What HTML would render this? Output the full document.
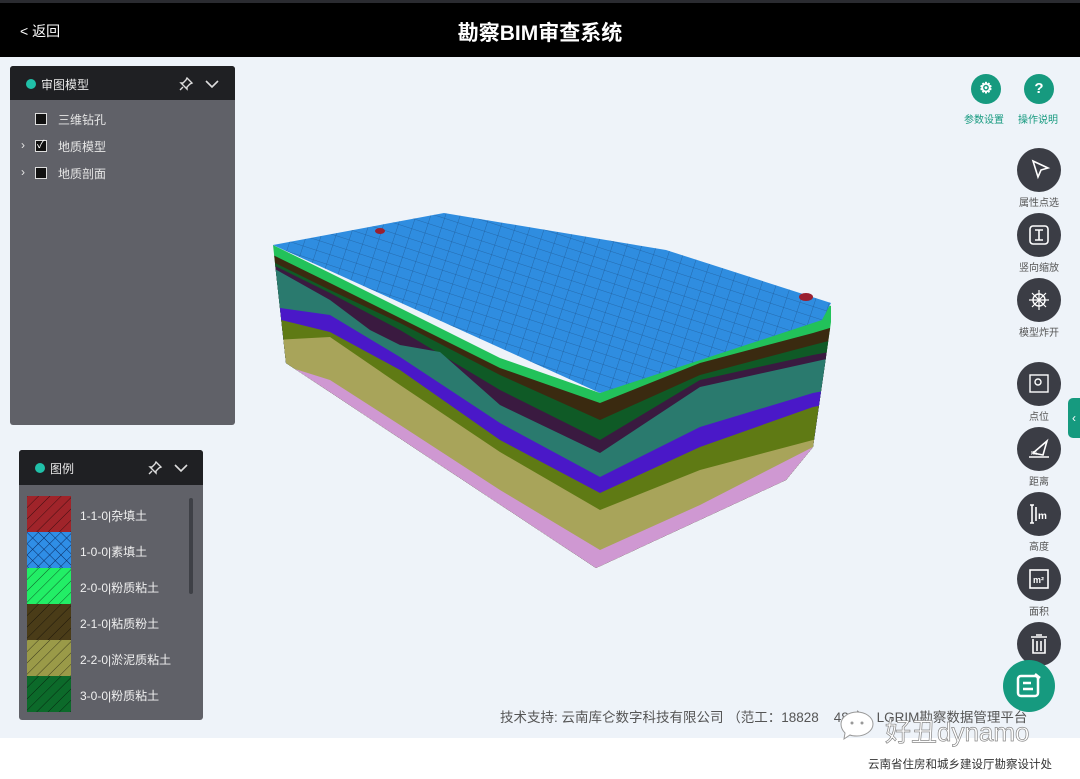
<!DOCTYPE html>
<html><head><meta charset="utf-8"><style>
*{margin:0;padding:0;box-sizing:border-box}
body{width:1080px;height:779px;overflow:hidden;background:#eef3f9;font-family:"Liberation Sans","Noto Sans CJK SC",sans-serif;position:relative}
.hdr{position:absolute;left:0;top:0;width:1080px;height:57px;background:#000;border-top:3px solid #2a2b30}
.hdr .back{position:absolute;left:20px;top:18px;color:#fff;font-size:14px}
.hdr .title{position:absolute;left:0;right:0;top:14px;text-align:center;color:#fff;font-size:21px;font-weight:bold}
.panel{position:absolute;background:#606168;border-radius:3px;overflow:hidden}
.ph{height:34px;background:#1f2023;color:#e8e8e8;font-size:12px;position:relative}
.ph .dot{position:absolute;left:16px;top:13px;width:10px;height:10px;border-radius:50%;background:#20c0a8}
.ph .t{position:absolute;left:31px;top:10px}
.ph svg{position:absolute;top:10px}
.item{position:absolute;color:#e6e6e6;font-size:12px}
.cb{position:absolute;width:12px;height:12px;border:1px solid #ddd;background:#111}
.sw{position:absolute;left:8px;width:44px;height:36px}
.lt{position:absolute;left:61px;color:#f0f0f0;font-size:12px}
.rb{position:absolute;left:1017px;width:44px;height:44px;border-radius:50%;background:#3b3d45}
.rl{position:absolute;width:60px;left:1009px;text-align:center;font-size:10px;color:#555}
.gb{position:absolute;width:30px;height:30px;border-radius:50%;background:#169a7f;color:#fff;text-align:center;font-weight:bold;line-height:30px;font-size:15px}
.gl{position:absolute;font-size:10px;color:#169a7f}
</style></head><body>
<div class="hdr"><div class="back">&lt; 返回</div><div class="title">勘察BIM审查系统</div></div>

<div class="panel" style="left:10px;top:66px;width:225px;height:359px">
 <div class="ph"><div class="dot"></div><div class="t">审图模型</div>
 <svg style="left:168px" width="16" height="16" viewBox="0 0 16 16"><path d="M9 2l5 5-2 1-3 3 0 2-6-6 2 0 3-3z M5 11l-3 3" stroke="#ddd" stroke-width="1.4" fill="none"/></svg>
 <svg style="left:194px" width="16" height="16" viewBox="0 0 16 16"><path d="M2 5l6 6 6-6" stroke="#ddd" stroke-width="1.6" fill="none"/></svg></div>
 <div class="cb" style="left:25px;top:47px"></div><div class="item" style="left:48px;top:45px">三维钻孔</div>
 <div class="item" style="left:11px;top:72px">›</div><div class="cb" style="left:25px;top:74px"></div><div class="item" style="left:27px;top:70px;color:#fff;font-size:11px">✓</div><div class="item" style="left:48px;top:72px">地质模型</div>
 <div class="item" style="left:11px;top:99px">›</div><div class="cb" style="left:25px;top:101px"></div><div class="item" style="left:48px;top:99px">地质剖面</div>
</div>

<svg width="0" height="0" style="position:absolute"><defs>
<pattern id="hl" width="8" height="8" patternUnits="userSpaceOnUse" patternTransform="rotate(45)"><line x1="0" y1="0" x2="0" y2="8" stroke="#000" stroke-width="1" opacity=".6"/></pattern>
<pattern id="hx" width="8" height="8" patternUnits="userSpaceOnUse" patternTransform="rotate(45)"><path d="M0 0V8M0 0H8" stroke="#0a2a60" stroke-width="1"/></pattern>
</defs></svg>

<div class="panel" style="left:19px;top:450px;width:184px;height:270px">
 <div class="ph" style="height:35px"><div class="dot"></div><div class="t">图例</div>
 <svg style="left:128px" width="16" height="16" viewBox="0 0 16 16"><path d="M9 2l5 5-2 1-3 3 0 2-6-6 2 0 3-3z M5 11l-3 3" stroke="#ddd" stroke-width="1.4" fill="none"/></svg>
 <svg style="left:154px" width="16" height="16" viewBox="0 0 16 16"><path d="M2 5l6 6 6-6" stroke="#ddd" stroke-width="1.6" fill="none"/></svg></div>
 <svg class="sw" style="top:46px" viewBox="0 0 44 36"><rect width="44" height="36" fill="#a0242a"/><rect width="44" height="36" fill="url(#hl)"/></svg><div class="lt" style="top:57px">1-1-0|杂填土</div>
 <svg class="sw" style="top:82px" viewBox="0 0 44 36"><rect width="44" height="36" fill="#2f8ee6"/><rect width="44" height="36" fill="url(#hx)"/></svg><div class="lt" style="top:93px">1-0-0|素填土</div>
 <svg class="sw" style="top:118px" viewBox="0 0 44 36"><rect width="44" height="36" fill="#22ee66"/><rect width="44" height="36" fill="url(#hl)"/></svg><div class="lt" style="top:129px">2-0-0|粉质粘土</div>
 <svg class="sw" style="top:154px" viewBox="0 0 44 36"><rect width="44" height="36" fill="#4a3c18"/><rect width="44" height="36" fill="url(#hl)"/></svg><div class="lt" style="top:165px">2-1-0|粘质粉土</div>
 <svg class="sw" style="top:190px" viewBox="0 0 44 36"><rect width="44" height="36" fill="#9a9a48"/><rect width="44" height="36" fill="url(#hl)"/></svg><div class="lt" style="top:201px">2-2-0|淤泥质粘土</div>
 <svg class="sw" style="top:226px" viewBox="0 0 44 36"><rect width="44" height="36" fill="#0c6a2a"/><rect width="44" height="36" fill="url(#hl)"/></svg><div class="lt" style="top:237px">3-0-0|粉质粘土</div>
 <div style="position:absolute;left:170px;top:48px;width:4px;height:96px;background:#3e4046;border-radius:2px"></div>
</div>

<svg style="position:absolute;left:0;top:0" width="1080" height="779" viewBox="0 0 1080 779">
<defs>
<clipPath id="side"><path d="M273 245 L600 393 L831 303 L831 322 L813 447 L786 480 L596 568 L286 363 Z"/></clipPath>
<pattern id="grid" width="14" height="10" patternUnits="userSpaceOnUse" patternTransform="rotate(18)"><path d="M0 0H14M0 0V10" stroke="#1a4a80" stroke-width=".8" opacity=".7"/></pattern>
</defs>
<g clip-path="url(#side)">
 <path d="M260 245 L273 245 L330 273 L400 308 L500 358 L600 393 L700 351 L813 311 L840 303 L840 600 L260 600Z" fill="#22c25a"/>
 <path d="M260 255 L273 255 L330 283 L400 318 L500 368 L600 403 L700 363 L813 333 L840 325 L840 600 L260 600Z" fill="#3a2a10"/>
 <path d="M260 262 L273 262 L330 290 L400 323 L500 375 L600 420 L700 375 L813 345 L840 338 L840 600 L260 600Z" fill="#0f5a26"/>
 <path d="M260 265 L273 265 L330 293 L400 330 L500 390 L600 440 L700 380 L813 355 L840 350 L840 600 L260 600Z" fill="#3a1a40"/>
 <path d="M260 268 L273 268 L330 300 L370 330 L400 345 L440 352 L500 405 L600 453 L700 387 L813 362 L840 356 L840 600 L260 600Z" fill="#2a7a6e"/>
 <path d="M260 307 L273 307 L330 315 L400 357 L500 423 L600 477 L700 427 L813 393 L840 388 L840 600 L260 600Z" fill="#4a18c8"/>
 <path d="M260 318 L273 318 L330 332 L400 370 L500 440 L600 493 L700 447 L813 407 L840 402 L840 600 L260 600Z" fill="#5f7a14"/>
 <path d="M260 340 L273 340 L330 337 L400 385 L500 452 L600 510 L700 470 L813 440 L840 436 L840 600 L260 600Z" fill="#a8a45a"/>
 <path d="M260 362 L273 362 L330 380 L400 425 L500 490 L600 550 L700 505 L813 447 L840 447 L840 600 L260 600Z" fill="#cf98d2"/>
</g>
<path d="M273 245 L444 213 L666 250 L831 303 L822 320 L600 393 Z" fill="#2f8de0"/>
<path d="M273 245 L444 213 L666 250 L831 303 L822 320 L600 393 Z" fill="url(#grid)"/>
<ellipse cx="380" cy="231" rx="5" ry="3" fill="#9a2030"/>
<ellipse cx="806" cy="297" rx="7" ry="4" fill="#9a2030"/>
</svg>

<div class="gb" style="left:971px;top:74px">⚙</div><div class="gl" style="left:964px;top:111px">参数设置</div>
<div class="gb" style="left:1024px;top:74px">?</div><div class="gl" style="left:1018px;top:111px">操作说明</div>

<div class="rb" style="top:148px"><svg width="44" height="44"><path d="M16 13l15 7-7 2-3 7z" stroke="#fff" stroke-width="1.6" fill="none"/></svg></div><div class="rl" style="top:194px">属性点选</div>
<div class="rb" style="top:213px"><svg width="44" height="44"><rect x="13" y="13" width="18" height="18" rx="3" stroke="#fff" stroke-width="1.6" fill="none"/><path d="M18 17h8M18 27h8M22 17v10" stroke="#fff" stroke-width="1.6"/></svg></div><div class="rl" style="top:259px">竖向缩放</div>
<div class="rb" style="top:278px"><svg width="44" height="44"><circle cx="22" cy="22" r="6" stroke="#fff" fill="none" stroke-width="1.4"/><path d="M22 12v20M12 22h20M15 15l14 14M29 15l-14 14" stroke="#fff" stroke-width="1.2"/></svg></div><div class="rl" style="top:324px">模型炸开</div>
<div class="rb" style="top:362px"><svg width="44" height="44"><rect x="13" y="13" width="18" height="17" stroke="#fff" fill="none" stroke-width="1.4"/><circle cx="21" cy="20" r="3" stroke="#fff" fill="none" stroke-width="1.4"/></svg></div><div class="rl" style="top:408px">点位</div>
<div class="rb" style="top:427px"><svg width="44" height="44"><path d="M16 26l14-12-4 14z M12 30h20" stroke="#fff" stroke-width="1.6" fill="none"/><text x="14" y="28" fill="#fff" font-size="7">m</text></svg></div><div class="rl" style="top:473px">距离</div>
<div class="rb" style="top:492px"><svg width="44" height="44"><path d="M15 13v18M13 13h4M13 31h4M19 15v14" stroke="#fff" stroke-width="1.6" fill="none"/><text x="21" y="27" fill="#fff" font-size="10" font-weight="bold">m</text></svg></div><div class="rl" style="top:538px">高度</div>
<div class="rb" style="top:557px"><svg width="44" height="44"><rect x="13" y="13" width="18" height="18" stroke="#fff" fill="none" stroke-width="1.6"/><text x="16" y="26" fill="#fff" font-size="9" font-weight="bold">m²</text></svg></div><div class="rl" style="top:603px">面积</div>
<div class="rb" style="top:622px"><svg width="44" height="44"><path d="M14 15h16M19 13h6M16 17v14h12V17M20 19v10M24 19v10" stroke="#fff" stroke-width="1.6" fill="none"/></svg></div>

<div style="position:absolute;left:1068px;top:398px;width:12px;height:40px;background:#169a7f;border-radius:5px 0 0 5px;color:#fff;font-size:12px;line-height:40px;text-align:center">‹</div>

<div style="position:absolute;left:500px;top:706px;font-size:13.5px;color:#555">技术支持: 云南库仑数字科技有限公司 （范工：18828&nbsp;&nbsp;&nbsp;&nbsp;480），LGRIM勘察数据管理平台</div>
<div style="position:absolute;left:1003px;top:660px;width:52px;height:52px;border-radius:50%;background:#169a7f"><svg width="52" height="52"><rect x="15" y="16" width="20" height="20" rx="3" stroke="#fff" stroke-width="2.5" fill="none"/><path d="M20 23h8M20 29h10M32 14l5 4" stroke="#fff" stroke-width="2.5"/></svg></div>
<div style="position:absolute;left:0;top:738px;width:1080px;height:41px;background:#fff"></div>
<svg style="position:absolute;left:835px;top:708px" width="50" height="36"><path d="M6 16c0-7 8-12 16-12s16 5 16 12-8 12-16 12c-3 0-5 0-7-1l-6 4 1-6C8 23 6 20 6 16z" fill="#fff" stroke="#999" stroke-width="1"/><circle cx="17" cy="15" r="1.5" fill="#999"/><circle cx="27" cy="15" r="1.5" fill="#999"/></svg>
<div style="position:absolute;left:885px;top:712px;font-size:26px;color:#fff;-webkit-text-stroke:0.7px #888">好丑dynamo</div>
<div style="position:absolute;left:868px;top:756px;font-size:11.5px;color:#333">云南省住房和城乡建设厅勘察设计处</div>
</body></html>
